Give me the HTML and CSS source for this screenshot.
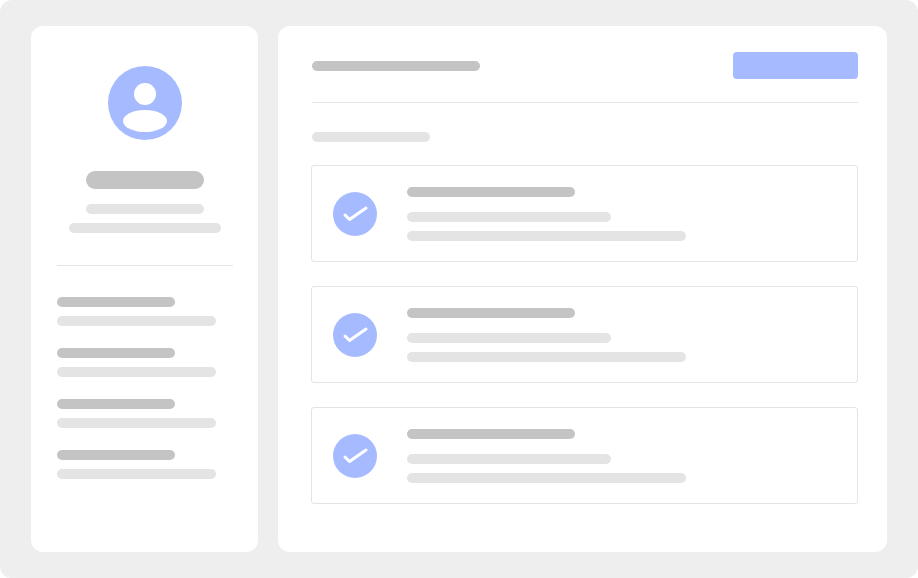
FILE: index.html
```html
<!DOCTYPE html>
<html lang="en">
<head>
<meta charset="utf-8">
<title>Profile</title>
<link rel="stylesheet" href="styles.css">
</head>
<body>
<div class="app">
  <aside class="side">
    <svg class="avatar" viewBox="0 0 74 74" aria-hidden="true">
      <circle cx="37" cy="37" r="37" fill="#a6baff"/>
      <circle cx="37" cy="28" r="11" fill="#fff"/>
      <ellipse cx="37" cy="55" rx="22" ry="11" fill="#fff"/>
    </svg>
    <div class="bar dark name"></div>
    <div class="bar light sub1"></div>
    <div class="bar light sub2"></div>
    <div class="rule side-rule"></div>
    <div class="side-list">
      <div class="side-item"><div class="bar dark w118"></div><div class="bar light w159"></div></div>
      <div class="side-item"><div class="bar dark w118"></div><div class="bar light w159"></div></div>
      <div class="side-item"><div class="bar dark w118"></div><div class="bar light w159"></div></div>
      <div class="side-item"><div class="bar dark w118"></div><div class="bar light w159"></div></div>
    </div>
  </aside>
  <main class="main">
    <header class="head">
      <div class="bar dark title"></div>
      <div class="btn"></div>
    </header>
    <div class="rule"></div>
    <div class="bar light label"></div>
    <div class="cards">
      <section class="card">
        <svg class="check" viewBox="0 0 44 44" aria-hidden="true"><circle cx="22" cy="22" r="22" fill="#a6baff"/><path d="M12 23 L16.5 27.5 L33 16" fill="none" stroke="#fff" stroke-width="3" stroke-linecap="round" stroke-linejoin="round"/></svg>
        <div class="lines"><div class="bar dark w168"></div><div class="bar light w204"></div><div class="bar light w279"></div></div>
      </section>
      <section class="card">
        <svg class="check" viewBox="0 0 44 44" aria-hidden="true"><circle cx="22" cy="22" r="22" fill="#a6baff"/><path d="M12 23 L16.5 27.5 L33 16" fill="none" stroke="#fff" stroke-width="3" stroke-linecap="round" stroke-linejoin="round"/></svg>
        <div class="lines"><div class="bar dark w168"></div><div class="bar light w204"></div><div class="bar light w279"></div></div>
      </section>
      <section class="card">
        <svg class="check" viewBox="0 0 44 44" aria-hidden="true"><circle cx="22" cy="22" r="22" fill="#a6baff"/><path d="M12 23 L16.5 27.5 L33 16" fill="none" stroke="#fff" stroke-width="3" stroke-linecap="round" stroke-linejoin="round"/></svg>
        <div class="lines"><div class="bar dark w168"></div><div class="bar light w204"></div><div class="bar light w279"></div></div>
      </section>
    </div>
  </main>
</div>
</body>
</html>
```
FILE: styles.css
```css
html, body { margin: 0; padding: 0; background: #fff; }
.app {
  width: 918px; height: 578px; box-sizing: border-box;
  padding: 26px 31px; display: flex; gap: 20px;
  background: #eee; border-radius: 12px; overflow: hidden;
}
.side, .main { background: #fff; border-radius: 12px; box-sizing: border-box; }
.side {
  width: 227px; flex: none; padding: 40px 25px 0 26px;
  display: flex; flex-direction: column; align-items: center;
}
.avatar { width: 74px; height: 74px; display: block; flex: none; }
.bar { height: 10px; border-radius: 5px; flex: none; }
.dark { background: #c4c4c4; }
.light { background: #e4e4e4; }
.name { width: 118px; height: 18px; border-radius: 9px; margin-top: 31px; }
.sub1 { width: 118px; margin-top: 15px; }
.sub2 { width: 152px; margin-top: 9px; }
.rule { height: 1px; background: #e4e4e4; align-self: stretch; }
.side-rule { width: 100%; margin-top: 32px; }
.side-list { width: 100%; margin-top: 31px; display: flex; flex-direction: column; gap: 22px; }
.side-item { display: flex; flex-direction: column; gap: 9px; }
.w118 { width: 118px; }
.w159 { width: 159px; }
.main { flex: 1; padding: 26px 29px 0 33px; display: flex; flex-direction: column; }
.head { display: flex; justify-content: space-between; align-items: center; margin-left: 1px; height: 27px; }
.title { width: 168px; }
.btn { width: 125px; height: 27px; background: #a6baff; border-radius: 4px; }
.main > .rule { margin: 23px 0 0 1px; }
.label { width: 118px; margin: 29px 0 0 1px; }
.cards { margin-top: 23px; display: flex; flex-direction: column; gap: 24px; }
.card {
  height: 97px; box-sizing: border-box; border: 1px solid #e4e4e4; border-radius: 3px;
  padding: 0 0 0 21px; display: flex; align-items: center; gap: 30px;
}
.check { width: 44px; height: 44px; display: block; flex: none; margin-top: 1px; }
.lines { display: flex; flex-direction: column; gap: 9px; }
.lines .dark { margin-bottom: 6px; }
.w168 { width: 168px; }
.w204 { width: 204px; }
.w279 { width: 279px; }
```
